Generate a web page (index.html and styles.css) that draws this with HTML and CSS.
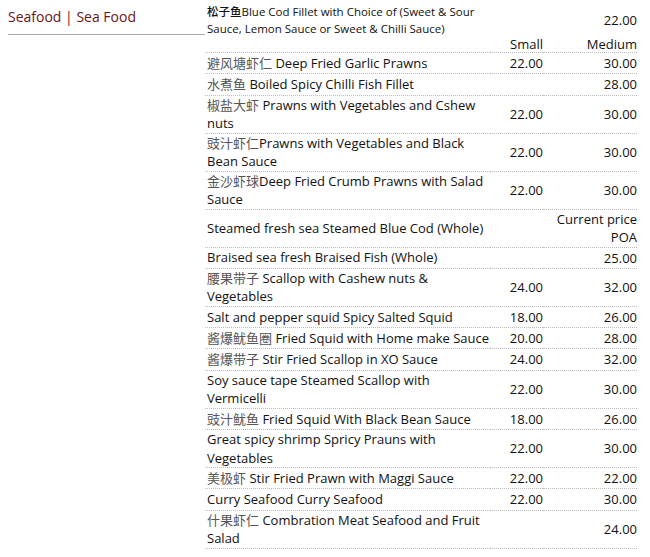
FILE: index.html
```html
<!DOCTYPE html>
<html>
<head>
<meta charset="utf-8">
<link rel="stylesheet" href="styles.css">
</head>
<body>
<div class="page">
  <aside class="side">
    <h2 class="cat-title">Seafood | Sea Food</h2>
  </aside>
  <main class="menu">
    <table class="menu-table">
      <colgroup>
        <col class="col-name">
        <col class="col-small">
        <col class="col-medium">
      </colgroup>
      <tr class="row row-intro">
        <td class="name name-small">松子鱼Blue Cod Fillet with Choice of (Sweet &amp; Sour Sauce, Lemon Sauce or Sweet &amp; Chilli Sauce)</td>
        <td class="price"></td>
        <td class="price">22.00</td>
      </tr>
      <tr class="row row-head">
        <td class="name"></td>
        <td class="price">Small</td>
        <td class="price">Medium</td>
      </tr>
      <tr class="row"><td class="name"><span class="cn">避风塘虾仁</span> Deep Fried Garlic Prawns</td><td class="price">22.00</td><td class="price">30.00</td></tr>
      <tr class="row"><td class="name"><span class="cn">水煮鱼</span> Boiled Spicy Chilli Fish Fillet</td><td class="price"></td><td class="price">28.00</td></tr>
      <tr class="row"><td class="name"><span class="cn">椒盐大虾</span> Prawns with Vegetables and Cshew nuts</td><td class="price">22.00</td><td class="price">30.00</td></tr>
      <tr class="row"><td class="name"><span class="cn">豉汁虾仁</span>Prawns with Vegetables and Black Bean Sauce</td><td class="price">22.00</td><td class="price">30.00</td></tr>
      <tr class="row"><td class="name"><span class="cn">金沙虾球</span>Deep Fried Crumb Prawns with Salad Sauce</td><td class="price">22.00</td><td class="price">30.00</td></tr>
      <tr class="row"><td class="name">Steamed fresh sea Steamed Blue Cod (Whole)</td><td class="price"></td><td class="price wrap">Current price POA</td></tr>
      <tr class="row"><td class="name">Braised sea fresh Braised Fish (Whole)</td><td class="price"></td><td class="price">25.00</td></tr>
      <tr class="row"><td class="name"><span class="cn">腰果带子</span> Scallop with Cashew nuts &amp; Vegetables</td><td class="price">24.00</td><td class="price">32.00</td></tr>
      <tr class="row"><td class="name">Salt and pepper squid Spicy Salted Squid</td><td class="price">18.00</td><td class="price">26.00</td></tr>
      <tr class="row"><td class="name"><span class="cn">酱爆鱿鱼圈</span> Fried Squid with Home make Sauce</td><td class="price">20.00</td><td class="price">28.00</td></tr>
      <tr class="row"><td class="name"><span class="cn">酱爆带子</span> Stir Fried Scallop in XO Sauce</td><td class="price">24.00</td><td class="price">32.00</td></tr>
      <tr class="row"><td class="name">Soy sauce tape Steamed Scallop with Vermicelli</td><td class="price">22.00</td><td class="price">30.00</td></tr>
      <tr class="row"><td class="name"><span class="cn">豉汁鱿鱼</span> Fried Squid With Black Bean Sauce</td><td class="price">18.00</td><td class="price">26.00</td></tr>
      <tr class="row"><td class="name">Great spicy shrimp Spricy Prauns with Vegetables</td><td class="price">22.00</td><td class="price">30.00</td></tr>
      <tr class="row"><td class="name"><span class="cn">美极虾</span> Stir Fried Prawn with Maggi Sauce</td><td class="price">22.00</td><td class="price">22.00</td></tr>
      <tr class="row"><td class="name">Curry Seafood Curry Seafood</td><td class="price">22.00</td><td class="price">30.00</td></tr>
      <tr class="row"><td class="name"><span class="cn">什果虾仁</span> Combration Meat Seafood and Fruit Salad</td><td class="price"></td><td class="price">24.00</td></tr>
    </table>
  </main>
</div>
</body>
</html>
```

FILE: styles.css
```css
html, body {
  margin: 0;
  padding: 0;
  background: #ffffff;
}

body {
  font-family: "Open Sans", "Noto Sans CJK SC", sans-serif;
  color: #111111;
  font-size: 13px;
  font-weight: 500;
}

.page {
  display: flex;
  padding-left: 8px;
  width: 630px;
}

.side {
  width: 197px;
  flex: none;
  padding-top: 8px;
}

.cat-title {
  margin: 0;
  font-size: 14px;
  line-height: 18px;
  font-weight: 500;
  color: #6a1420;
  padding-bottom: 8px;
  border-bottom: 1px solid #a9a9a9;
}

.menu {
  width: 432px;
  flex: none;
  padding-top: 4px;
}

.menu-table {
  width: 432px;
  border-collapse: collapse;
  table-layout: fixed;
}

.col-name {
  width: 285px;
}

.col-small {
  width: 53px;
}

.col-medium {
  width: 94px;
}

.menu-table td {
  padding: 0;
  line-height: 18.5px;
  vertical-align: middle;
}

.menu-table td.price {
  line-height: 20.3px;
}

.menu-table td.wrap {
  line-height: 18.5px;
  white-space: normal;
}

.row td {
  border-bottom: 1px dotted #bdbdbd;
}

.row-intro td {
  border-bottom: none;
}

.menu-table .row-head td {
  line-height: 15px;
}

.name {
  padding-left: 2px !important;
}

.price {
  text-align: right;
  white-space: nowrap;
}

.menu-table .name-small {
  font-size: 11.5px;
  line-height: 16.5px;
}

.cn {
  color: #555;
  font-weight: 400;
}
```
